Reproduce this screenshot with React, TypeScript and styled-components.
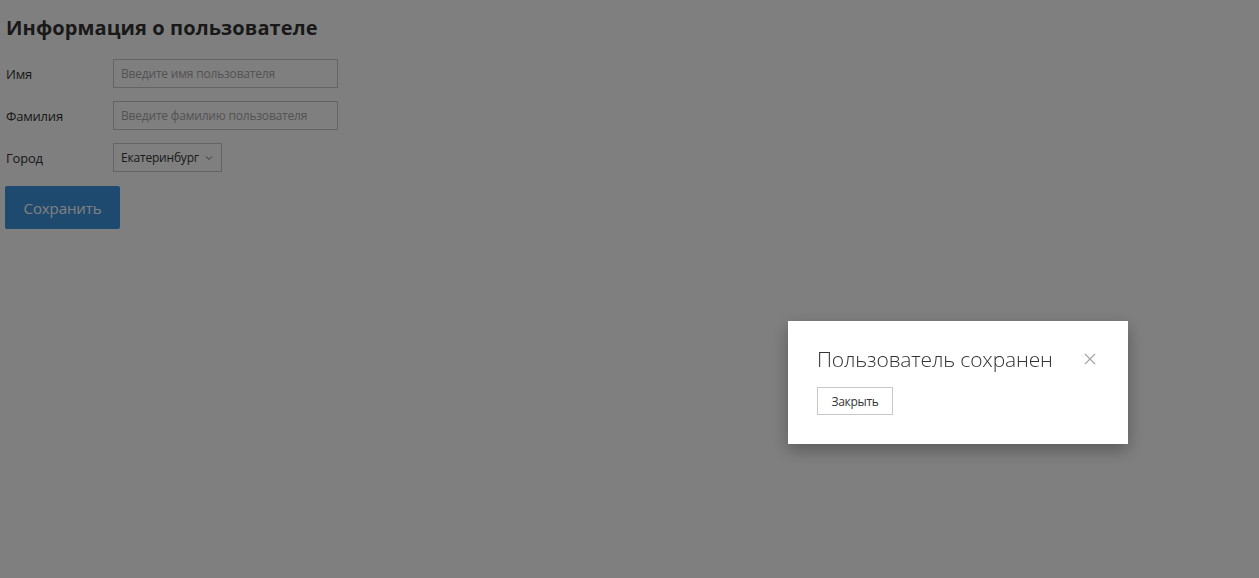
import React from "react";
import styled, { createGlobalStyle } from "styled-components";

const Global = createGlobalStyle`
  html, body { margin: 0; padding: 0; background: #ffffff; }
  body { font-family: "Open Sans", "Noto Sans", sans-serif; color: #333333; }
  * { box-sizing: border-box; }
`;

const Page = styled.div`
  padding: 14px 5px 0 5px;
  min-height: 578px;
`;

const Title = styled.h1`
  margin: 0 0 17px 1px;
  font-size: 20px;
  line-height: 28px;
  font-weight: 700;
  letter-spacing: 0.1px;
  color: #333333;
`;

const Form = styled.div`
  display: flex;
  flex-direction: column;
  gap: 13px;
`;

const Row = styled.div`
  display: flex;
  align-items: center;
  height: 29px;
`;

const Label = styled.label`
  width: 108px;
  padding-left: 1px;
  font-size: 13px;
  letter-spacing: -0.2px;
  color: #333333;
`;

const Input = styled.input`
  width: 225px;
  height: 29px;
  border: 1px solid #c8c8c8;
  padding: 0 7px;
  font-family: inherit;
  font-size: 12px;
  letter-spacing: -0.2px;
  color: #333333;
  background: #ffffff;
  outline: none;
  &::placeholder { color: #a6a6a6; }
`;

const Select = styled.div`
  display: flex;
  align-items: center;
  gap: 6px;
  height: 29px;
  padding: 0 8px 0 7px;
  border: 1px solid #c8c8c8;
  background: #ffffff;
  font-size: 12px;
  letter-spacing: -0.2px;
  color: #333333;
`;

const Chevron = styled.svg`
  width: 8px;
  height: 8px;
  margin-top: 1px;
`;

const PrimaryButton = styled.button`
  margin-top: 1px;
  width: 115px;
  height: 43px;
  border: none;
  border-radius: 2px;
  background: #3f94e0;
  color: #ffffff;
  font-family: inherit;
  font-size: 15px;
  letter-spacing: -0.1px;
`;

const Overlay = styled.div`
  position: fixed;
  inset: 0;
  background: rgba(0, 0, 0, 0.5);
`;

const Dialog = styled.div`
  position: fixed;
  left: 788px;
  top: 321px;
  width: 340px;
  height: 123px;
  background: #ffffff;
  box-shadow: 0 6px 16px rgba(0, 0, 0, 0.3);
  padding: 23px 29px;
  display: flex;
  flex-direction: column;
  gap: 13px;
`;

const DialogHeader = styled.div`
  display: flex;
  align-items: center;
  justify-content: space-between;
`;

const DialogTitle = styled.div`
  font-size: 21px;
  line-height: 30px;
  font-weight: 300;
  letter-spacing: -0.15px;
  color: #333333;
`;

const CloseIcon = styled.svg`
  width: 12px;
  height: 12px;
  margin-right: 3px;
`;

const DefaultButton = styled.button`
  align-self: flex-start;
  width: 76px;
  height: 28px;
  border: 1px solid #c8c8c8;
  background: #ffffff;
  color: #333333;
  font-family: inherit;
  font-size: 12px;
  letter-spacing: -0.3px;
  padding: 0;
`;

export default function App() {
  return (
    <>
      <Global />
      <Page>
        <Title>Информация о пользователе</Title>
        <Form>
          <Row>
            <Label>Имя</Label>
            <Input placeholder="Введите имя пользователя" />
          </Row>
          <Row>
            <Label>Фамилия</Label>
            <Input placeholder="Введите фамилию пользователя" />
          </Row>
          <Row>
            <Label>Город</Label>
            <Select>
              Екатеринбург
              <Chevron viewBox="0 0 8 8">
                <path d="M1 2.5 L4 5.5 L7 2.5" fill="none" stroke="#666" strokeWidth="1" />
              </Chevron>
            </Select>
          </Row>
          <div>
            <PrimaryButton>Сохранить</PrimaryButton>
          </div>
        </Form>
      </Page>
      <Overlay />
      <Dialog>
        <DialogHeader>
          <DialogTitle>Пользователь сохранен</DialogTitle>
          <CloseIcon viewBox="0 0 12 12">
            <path d="M1 1 L11 11 M11 1 L1 11" stroke="#a6a6a6" strokeWidth="1.2" />
          </CloseIcon>
        </DialogHeader>
        <DefaultButton>Закрыть</DefaultButton>
      </Dialog>
    </>
  );
}
